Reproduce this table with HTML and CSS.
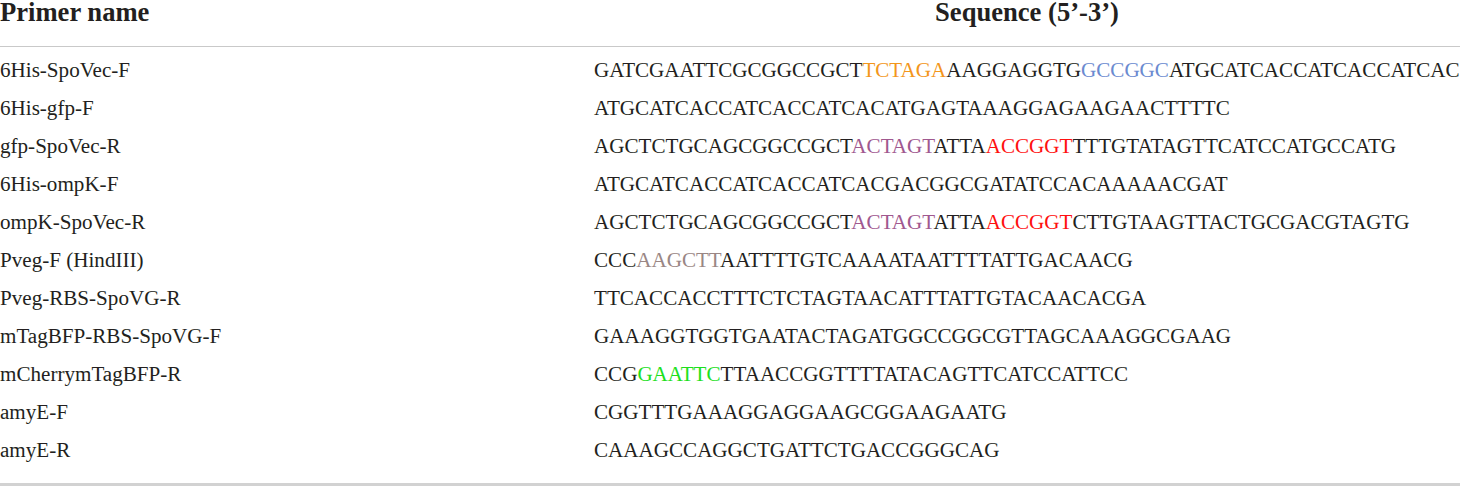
FILE: index.html
```html
<!DOCTYPE html>
<html lang="en">
<head>
<meta charset="utf-8">
<title>Primers</title>
<link rel="stylesheet" href="styles.css">
</head>
<body>
<table class="primers">
  <colgroup><col class="col-name"><col class="col-seq"></colgroup>
  <thead>
    <tr><th class="h-name">Primer name</th><th class="h-seq">Sequence (5’-3’)</th></tr>
  </thead>
  <tbody>
    <tr class="first"><td>6His-SpoVec-F</td><td>GATCGAATTCGCGGCCGCT<span class="orange">TCTAGA</span>AAGGAGGTG<span class="blue">GCCGGC</span>ATGCATCACCATCACCATCAC</td></tr>
    <tr><td>6His-gfp-F</td><td>ATGCATCACCATCACCATCACATGAGTAAAGGAGAAGAACTTTTC</td></tr>
    <tr><td>gfp-SpoVec-R</td><td>AGCTCTGCAGCGGCCGCT<span class="purple">ACTAGT</span>ATTA<span class="red">ACCGGT</span>TTTGTATAGTTCATCCATGCCATG</td></tr>
    <tr><td>6His-ompK-F</td><td>ATGCATCACCATCACCATCACGACGGCGATATCCACAAAAACGAT</td></tr>
    <tr><td>ompK-SpoVec-R</td><td>AGCTCTGCAGCGGCCGCT<span class="purple">ACTAGT</span>ATTA<span class="red">ACCGGT</span>CTTGTAAGTTACTGCGACGTAGTG</td></tr>
    <tr><td>Pveg-F (HindIII)</td><td>CCC<span class="taupe">AAGCTT</span>AATTTTGTCAAAATAATTTTATTGACAACG</td></tr>
    <tr><td>Pveg-RBS-SpoVG-R</td><td>TTCACCACCTTTCTCTAGTAACATTTATTGTACAACACGA</td></tr>
    <tr><td>mTagBFP-RBS-SpoVG-F</td><td>GAAAGGTGGTGAATACTAGATGGCCGGCGTTAGCAAAGGCGAAG</td></tr>
    <tr><td>mCherrymTagBFP-R</td><td>CCG<span class="green">GAATTC</span>TTAACCGGTTTTATACAGTTCATCCATTCC</td></tr>
    <tr><td>amyE-F</td><td>CGGTTTGAAAGGAGGAAGCGGAAGAATG</td></tr>
    <tr class="last"><td>amyE-R</td><td>CAAAGCCAGGCTGATTCTGACCGGGCAG</td></tr>
  </tbody>
</table>
</body>
</html>
```

FILE: styles.css
```css
html, body {
  margin: 0;
  padding: 0;
  background: #ffffff;
}

body {
  width: 1460px;
  overflow: hidden;
  font-family: "Liberation Serif", "Times New Roman", serif;
  color: #231f20;
}

.primers {
  width: 1460px;
  border-collapse: collapse;
  table-layout: fixed;
  white-space: nowrap;
}

.col-name { width: 594px; }
.col-seq { width: 866px; }

.primers th {
  font-size: 26.6px;
  font-weight: bold;
  line-height: 24px;
  height: 22px;
  padding: 0 0 22px 0;
  border-bottom: 1px solid #c9c9c9;
  vertical-align: top;
}

.h-name { text-align: left; }
.h-seq { text-align: center; }

.primers td {
  font-size: 21.1px;
  line-height: 38px;
  height: 38px;
  padding: 0;
  text-align: left;
  vertical-align: top;
}

.primers tr.first td { padding-top: 4px; }
.primers tr.last td {
  padding-bottom: 14px;
  border-bottom: 3px solid #d2d2d2;
}

.orange { color: #f3961b; }
.blue { color: #6b8ad0; }
.purple { color: #a0588f; }
.red { color: #ff1010; }
.taupe { color: #9a8785; }
.green { color: #1de01d; }
```
